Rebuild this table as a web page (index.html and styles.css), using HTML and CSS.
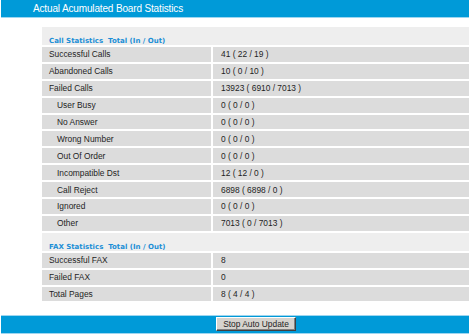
FILE: index.html
```html
<!DOCTYPE html>
<html lang="en">
<head>
    <meta charset="UTF-8">
    <meta name="viewport" content="width=device-width, initial-scale=1.0">
    <title>Board Statistics</title>
    <link rel="stylesheet" href="styles.css">
</head>
<body>
    <div class="titlebar">Actual Acumulated Board Statistics</div>

    <div class="content">
        <table class="stats">
            <!-- Calls -->
            <tr class="section">
                <td colspan="2">Call Statistics&nbsp; Total (In / Out)</td>
            </tr>
            <tr><td class="label">Successful Calls</td><td class="value">41 ( 22 / 19 )</td></tr>
            <tr><td class="label">Abandoned Calls</td><td class="value">10 ( 0 / 10 )</td></tr>
            <tr><td class="label">Failed Calls</td><td class="value">13923 ( 6910 / 7013 )</td></tr>
            <tr><td class="label sub">User Busy</td><td class="value">0 ( 0 / 0 )</td></tr>
            <tr><td class="label sub">No Answer</td><td class="value">0 ( 0 / 0 )</td></tr>
            <tr><td class="label sub">Wrong Number</td><td class="value">0 ( 0 / 0 )</td></tr>
            <tr><td class="label sub">Out Of Order</td><td class="value">0 ( 0 / 0 )</td></tr>
            <tr><td class="label sub">Incompatible Dst</td><td class="value">12 ( 12 / 0 )</td></tr>
            <tr><td class="label sub">Call Reject</td><td class="value">6898 ( 6898 / 0 )</td></tr>
            <tr><td class="label sub">Ignored</td><td class="value">0 ( 0 / 0 )</td></tr>
            <tr><td class="label sub">Other</td><td class="value">7013 ( 0 / 7013 )</td></tr>
            <!-- Fax -->
            <tr class="section">
                <td colspan="2">FAX Statistics&nbsp; Total (In / Out)</td>
            </tr>
            <tr><td class="label">Successful FAX</td><td class="value">8</td></tr>
            <tr><td class="label">Failed FAX</td><td class="value">0</td></tr>
            <tr><td class="label">Total Pages</td><td class="value">8 ( 4 / 4 )</td></tr>
        </table>
    </div>

    <div class="footerbar">
        <button class="btn" type="button">Stop Auto Update</button>
    </div>
</body>
</html>
```

FILE: styles.css
```css
body {
    margin: 0;
    padding: 0;
    width: 471px;
    font-family: "Liberation Sans", Arial, sans-serif;
    background-color: #fff;
    color: #1e1e1e;
}

.titlebar {
    margin: 0 2px 0 1px;
    height: 17px;
    line-height: 17px;
    padding-left: 32px;
    background-color: #009ad8;
    border-bottom: 1px solid #9ed6f0;
    color: #fff;
    font-size: 10px;
    letter-spacing: -0.15px;
}

.content {
    padding-top: 9px;
}

.stats {
    width: 427px;
    margin-left: 42px;
    border-spacing: 0;
    font-size: 8.4px;
}

.stats td {
    height: 14.9px;
    padding: 0;
    background-color: #dcdcdc;
    border-bottom: 2px solid #fff;
    vertical-align: middle;
    white-space: nowrap;
}

.stats .label {
    box-sizing: border-box;
    width: 171px;
    padding-left: 7px;
    border-right: 2px solid #fff;
}

.stats .label.sub {
    padding-left: 15px;
}

.stats .value {
    padding-left: 8px;
}

.stats .section td {
    height: 18px;
    padding: 0 7px;
    background-color: #eee;
    vertical-align: bottom;
    font-family: "DejaVu Sans", Verdana, sans-serif;
    font-weight: bold;
    font-size: 7px;
    color: #1c8fd6;
}

.footerbar {
    margin: 12px 2px 0 1px;
    height: 16px;
    padding-top: 1px;
    padding-left: 215px;
    display: flex;
    align-items: flex-start;
    background-color: #009ad8;
    border-top: 1px solid #9ed6f0;
    border-bottom: 1px solid #9ed6f0;
}

.btn {
    width: 80px;
    height: 14px;
    padding: 0;
    font-family: "Liberation Sans", Arial, sans-serif;
    font-size: 8.4px;
    color: #1e1e1e;
    background-color: #d6d3ce;
    border: 1px solid;
    border-color: #fff #404040 #404040 #fff;
    box-shadow: inset -1px -1px 0 #808080;
    cursor: pointer;
}
```
